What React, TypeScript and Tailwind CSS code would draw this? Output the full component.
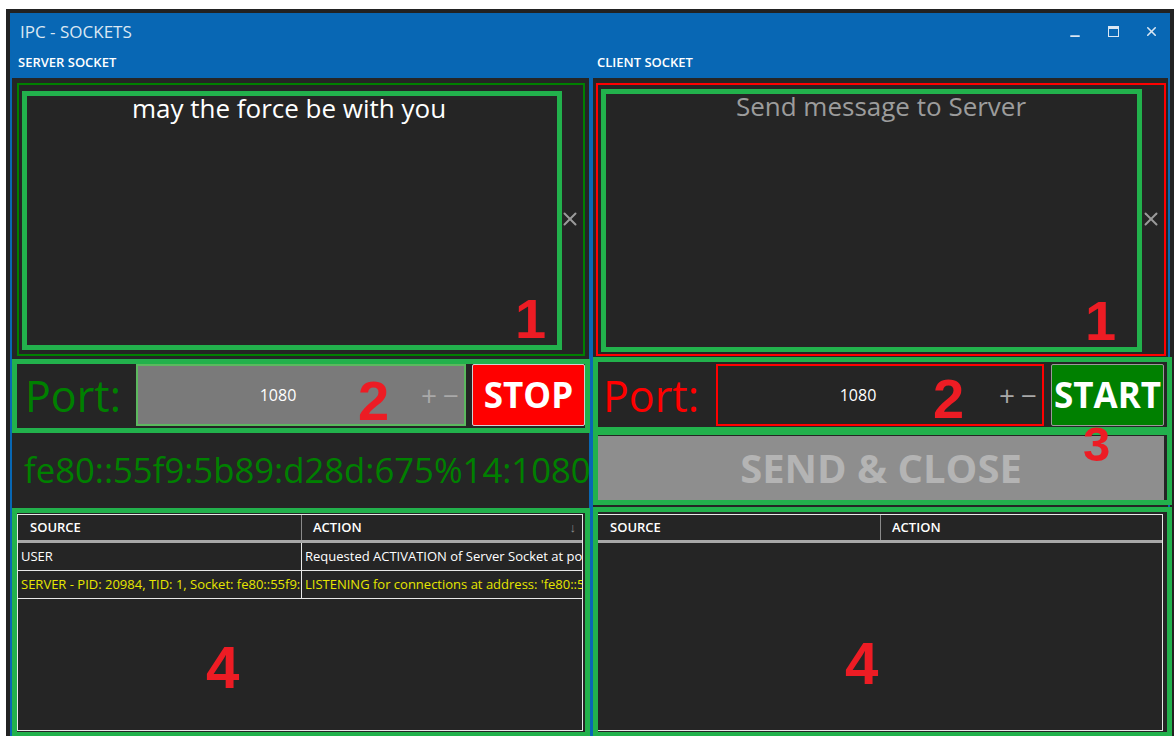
import { Minus, X } from "lucide-react";

const UI = "font-['Segoe_UI','Open_Sans','Noto_Sans',sans-serif]";
const MARK = "font-['Liberation_Sans',Arial,sans-serif]";

/* Paint-style callouts: bright green frames and red step numbers. */
function Frame({ className }: { className: string }) {
  return <div className={`pointer-events-none absolute border-[5px] border-[#22b14c] ${className}`} />;
}

function Step({ n, className }: { n: string; className: string }) {
  return (
    <span
      className={`pointer-events-none absolute font-bold leading-none text-[#ed1c24] ${MARK} ${className}`}
    >
      {n}
    </span>
  );
}

function ClearButton() {
  return (
    <span className="absolute right-[2px] top-[123px] text-[#9a9a9a]">
      <X size={22} strokeWidth={2.2} />
    </span>
  );
}

function PortBox({ dark }: { dark?: boolean }) {
  return (
    <div
      className={`flex h-[62px] items-center border-2 ${
        dark ? "w-[328px] border-[#ff0000] bg-[#252525]" : "w-[330px] border-[#5cb85f] bg-[#7a7a7a]"
      }`}
    >
      <span className="w-[280px] text-center text-[16px] text-white">1080</span>
      <div className="ml-auto flex items-center gap-[6px] pr-[5px] text-[#a9a9a9]">
        <span className="text-[28px] leading-none">+</span>
        <span className="text-[28px] leading-none">−</span>
      </div>
    </div>
  );
}

function LogGrid({
  split,
  rows,
  sorted,
}: {
  split: number;
  rows: { source: string; action: string; warn?: boolean }[];
  sorted?: boolean;
}) {
  return (
    <div className="flex h-[217px] flex-col border border-[#e8e8e8] bg-[#252525] text-[13px]">
      <div className="flex h-[28px] border-b-[3px] border-[#a8a8a8] font-semibold text-white">
        <div style={{ width: split }} className="flex items-center border-r border-[#8a8a8a] pl-[12px]">
          SOURCE
        </div>
        <div className="flex flex-1 items-center justify-between pl-[11px] pr-[6px]">
          <span>ACTION</span>
          {sorted && <span className="text-[13px] text-[#8c8c8c]">↓</span>}
        </div>
      </div>
      {rows.map((r, i) => (
        <div
          key={i}
          className={`flex h-[28px] border-b border-[#e8e8e8] ${r.warn ? "text-[#e6e600]" : "text-white"}`}
        >
          <div
            style={{ width: split }}
            className="flex items-center overflow-hidden whitespace-nowrap border-r border-[#e8e8e8] pl-[3px]"
          >
            {r.source}
          </div>
          <div className="flex flex-1 items-center overflow-hidden whitespace-nowrap pl-[3px]">{r.action}</div>
        </div>
      ))}
    </div>
  );
}

function ServerPane() {
  return (
    <div className="relative h-full bg-[#252525]">
      <div className="pl-[5px] pt-[5px]">
        <div className="relative h-[273px] w-[568px] border-2 border-[#008000] pr-[24px] pt-[4px] text-center text-[26px] text-white">
          may the force be with you
          <ClearButton />
        </div>
      </div>

      <div className="flex h-[77px] items-start gap-[6px] pl-[13px] pt-[8px]">
        <div className="flex h-[62px] w-[105px] items-center text-[43px] leading-none text-[#008000]">Port:</div>
        <PortBox />
        <button className="h-[62px] w-[113px] rounded-[2px] border border-[#d0d0d0] bg-[#ff0000] text-[35px] font-bold text-white">
          STOP
        </button>
      </div>

      <div className="flex h-[74px] items-center pl-[12px] text-[34.7px] leading-none text-[#008000]">
        fe80::55f9:5b89:d28d:675%14:1080
      </div>

      <div className="pl-[5px] pr-[6px] pt-[7px]">
        <LogGrid
          split={284}
          sorted
          rows={[
            { source: "USER", action: "Requested ACTIVATION of Server Socket at port 1080" },
            {
              source: "SERVER - PID: 20984, TID: 1, Socket: fe80::55f9:5b89",
              action: "LISTENING for connections at address: 'fe80::55f9:5b89'",
              warn: true,
            },
          ]}
        />
      </div>

      <Frame className="left-[10px] top-[13px] h-[259px] w-[540px]" />
      <Frame className="left-0 top-[281px] h-[74px] w-[578px]" />
      <Frame className="left-0 top-[430px] h-[229px] w-[578px]" />
      <Step n="1" className="left-[503px] top-[213px] text-[56px]" />
      <Step n="2" className="left-[346px] top-[295px] text-[56px]" />
      <Step n="4" className="left-[194px] top-[560px] text-[60px]" />
    </div>
  );
}

function ClientPane() {
  return (
    <div className="relative h-full bg-[#252525]">
      <div className="pl-[3px] pt-[5px]">
        <div className="relative h-[273px] w-[570px] border-2 border-[#ff0000] pt-[2px] text-center text-[26px] text-[#9c9c9c]">
          Send message to Server
          <ClearButton />
        </div>
      </div>

      <div className="flex h-[80px] items-start gap-[7px] pl-[10px] pt-[8px]">
        <div className="flex h-[62px] w-[106px] items-center text-[43px] leading-none text-[#ff0000]">Port:</div>
        <PortBox dark />
        <button className="h-[62px] w-[113px] rounded-[2px] border border-[#9a9a9a] bg-[#008000] text-[35px] font-bold text-white">
          START
        </button>
      </div>

      <div className="pl-[5px] pr-[4px]">
        <button className="flex h-[64px] w-full items-center justify-center bg-[#8e8e8e] text-[40px] font-bold text-[#b4b4b4]">
          SEND &amp; CLOSE
        </button>
      </div>

      <div className="pl-[4px] pr-[5px] pt-[14px]">
        <div className="h-[218px]">
          <LogGrid split={283} rows={[]} />
        </div>
      </div>

      <Frame className="left-[8px] top-[11px] h-[263px] w-[541px]" />
      <Frame className="left-0 top-[279px] h-[78px] w-[579px]" />
      <Frame className="left-0 top-[349px] h-[78px] w-[579px]" />
      <Frame className="left-0 top-[429px] h-[230px] w-[579px]" />
      <Step n="1" className="left-[492px] top-[215px] text-[56px]" />
      <Step n="2" className="left-[340px] top-[293px] text-[56px]" />
      <Step n="3" className="left-[490px] top-[342px] text-[49px]" />
      <Step n="4" className="left-[252px] top-[556px] text-[60px]" />
    </div>
  );
}

export default function App() {
  return (
    <div className={`h-[736px] w-[1174px] overflow-hidden bg-white ${UI}`}>
      <div className="ml-[6px] mt-[9px] flex h-[727px] w-[1168px] flex-col border-[4px] border-b-0 border-[#222222] bg-[#0867b4]">
        {/* title bar */}
        <div className="flex h-[35px] items-center pl-[10px] pt-[2px] text-[#dbe7f3]">
          <span className="flex-1 text-[17px]">IPC - SOCKETS</span>
          <div className="flex items-center">
            <span className="flex w-[38px] justify-center pt-[8px]">
              <Minus size={14} strokeWidth={3} />
            </span>
            <span className="flex w-[38px] justify-center">
              <span className="h-[11px] w-[11px] border border-t-[3px] border-[#dbe7f3]" />
            </span>
            <span className="flex w-[38px] justify-center">
              <X size={15} strokeWidth={2.5} />
            </span>
          </div>
        </div>

        <div className="flex flex-1">
          <section className="flex w-[581px] flex-col px-[2px]">
            <div className="flex h-[30px] items-center pl-[6px] text-[13px] font-semibold text-white">
              SERVER SOCKET
            </div>
            <div className="flex-1">
              <ServerPane />
            </div>
          </section>
          <section className="flex w-[579px] flex-col px-[2px]">
            <div className="flex h-[30px] items-center pl-[4px] text-[13px] font-semibold text-white">
              CLIENT SOCKET
            </div>
            <div className="flex-1">
              <ClientPane />
            </div>
          </section>
        </div>
      </div>
    </div>
  );
}
